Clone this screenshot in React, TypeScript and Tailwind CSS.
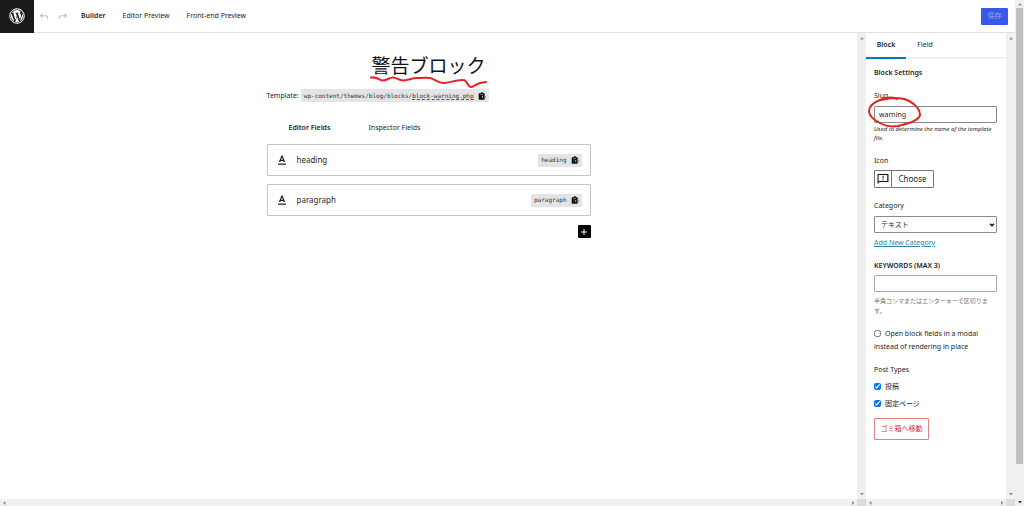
import { useState } from "react";
import type { ReactNode } from "react";

const FIELDS = ["heading", "paragraph"];

function WordPressLogo() {
    return (
        <svg viewBox="0 0 24 24" className="h-4 w-4" fill="#fff">
            <path d="M12.158 12.786l-2.698 7.84c.806.236 1.657.365 2.54.365 1.047 0 2.051-.18 2.986-.51-.024-.037-.046-.078-.065-.123l-2.763-7.572zM3.009 12c0 3.56 2.07 6.634 5.068 8.092L3.788 8.341A8.952 8.952 0 003.009 12zm15.06-.454c0-1.112-.399-1.881-.741-2.48-.456-.741-.883-1.368-.883-2.109 0-.826.627-1.596 1.51-1.596.04 0 .078.005.116.007A8.963 8.963 0 0012 3.009a8.984 8.984 0 00-7.512 4.052c.211.007.41.011.579.011.94 0 2.396-.114 2.396-.114.484-.028.541.684.057.741 0 0-.487.057-1.029.085l3.274 9.739 1.968-5.901-1.401-3.838c-.484-.028-.943-.085-.943-.085-.485-.029-.428-.769.057-.741 0 0 1.484.114 2.368.114.94 0 2.397-.114 2.397-.114.485-.028.542.684.057.741 0 0-.488.057-1.029.085l3.249 9.665.897-2.996c.456-1.168.684-2.137.684-2.907zm1.82-3.86c.039.286.06.593.06.924 0 .912-.171 1.938-.684 3.22l-2.746 7.94A8.989 8.989 0 0020.991 12a8.93 8.93 0 00-1.102-4.314zM12 1.2A10.8 10.8 0 1022.8 12 10.812 10.812 0 0012 1.2zm0 21.105A10.305 10.305 0 1122.305 12 10.317 10.317 0 0112 22.305z" />
            <circle cx="12" cy="12" r="11" fill="none" stroke="#fff" strokeWidth="1.200" />
        </svg>
    );
}

function UndoIcon({ flip = false }: { flip?: boolean }) {
    return (
        <svg
            viewBox="0 0 24 24"
            className={flip ? "h-3 w-3 -scale-x-100" : "h-3 w-3"}
            fill="#a8a8a8"
        >
            <path d="M18.3 11.7c-.6-.6-1.4-.9-2.3-.9H6.7l2.9-3.3-1.1-1-4.5 5L8.5 16l1-1-2.7-2.7H16c.5 0 .9.2 1.3.5 1 1 1 3.4 1 4.5v.3h1.5v-.2c0-1.5 0-4.3-1.5-5.7z" />
        </svg>
    );
}

function CopyIcon() {
    return (
        <svg viewBox="0 0 24 24" className="h-2 w-2">
            <path d="M8 4a4 3 0 0 1 8 0h2a2 2 0 0 1 2 2v15a2 2 0 0 1-2 2H4a2 2 0 0 1-2-2V6a2 2 0 0 1 2-2z" fill="#111" />
            <path d="M7 6.500h8v2H7zM11 14.500l4.500-4V13H24v3.500h-8.500v2.500z" fill="#e4e4e4" />
            <path d="M13 14.800l5-4v2.500h5v3h-5v2.500z" fill="#111" />
        </svg>
    );
}

function TextIcon() {
    return (
        <svg viewBox="0 0 24 24" className="h-3 w-3" fill="#222">
            <path d="M4 19v2.500h16V19zM9.500 13.800h5l.9 2.200h2.800L13.200 3h-2.400L5.800 16h2.800zM12 6.500l1.800 5.200h-3.600z" />
        </svg>
    );
}

function NoticeIcon() {
    return (
        <svg viewBox="0 0 24 24" className="h-3 w-3" fill="#111">
            <path d="M22 2H2a1 1 0 0 0-1 1v19l4-4h17a1 1 0 0 0 1-1V3a1 1 0 0 0-1-1zm-1.500 13.800H4.500l-1.300 1.300V4.200h17.300zM11 5.500h2v5.500h-2zm0 7h2v2h-2z" />
        </svg>
    );
}

/* Small triangle used at both ends of the scrollbars */
function Arrow({ d, color = "#909090" }: { d: string; color?: string }) {
    return (
        <svg viewBox="0 0 8 8" className="h-2 w-2" fill={color}>
            <path d={d} />
        </svg>
    );
}

const UP = "M2 5.500h4L4 3z";
const DOWN = "M2 3h4L4 5.500z";
const LEFT = "M5.500 2v4L3 4z";
const RIGHT = "M3 2v4l2.500-2z";

function ScrollPane({ children, className }: { children: ReactNode; className: string }) {
    return (
        <div className={`grid grid-cols-[minmax(0,1fr)_9px] grid-rows-[minmax(0,1fr)_7px] ${className}`}>
            <div className="overflow-hidden">{children}</div>
            <div className="flex flex-col items-center justify-between bg-[#f0f0f0] py-px">
                <Arrow d={UP} />
                <Arrow d={DOWN} />
            </div>
            <div className="flex items-center justify-between bg-[#f0f0f0]">
                <Arrow d={LEFT} />
                <Arrow d={RIGHT} />
            </div>
            <div className="bg-[#dcdcdc]" />
        </div>
    );
}

function CopyTag({ children }: { children: ReactNode }) {
    return (
        <button
            type="button"
            className="flex h-[13px] items-center gap-1 rounded-[1px] bg-[#e4e4e4] px-[3px] font-['DejaVu_Sans_Mono',monospace] text-[6px] text-[#333]"
        >
            <span>{children}</span>
            <CopyIcon />
        </button>
    );
}

export default function App() {
    const [slug, setSlug] = useState("warning");
    const [keywords, setKeywords] = useState("");

    return (
        <div className="flex h-screen overflow-hidden bg-white font-['Noto_Sans','Noto_Sans_CJK_JP',sans-serif] text-[7px] leading-3 text-[#1e1e1e]">
            <div className="flex min-w-0 flex-1 flex-col">
                {/* Toolbar */}
                <header className="flex h-[33px] shrink-0 items-center border-b border-[#e2e2e2]">
                    <a href="#dashboard" aria-label="WordPress" className="flex h-[33px] w-[34px] items-center justify-center bg-[#191919]">
                        <WordPressLogo />
                    </a>
                    <div className="flex gap-[7px] pl-1">
                        <button type="button" aria-label="Undo"><UndoIcon /></button>
                        <button type="button" aria-label="Redo"><UndoIcon flip /></button>
                    </div>
                    <nav className="flex gap-[17px] pl-3">
                        <button type="button" className="font-semibold">Builder</button>
                        <button type="button">Editor Preview</button>
                        <button type="button">Front-end Preview</button>
                    </nav>
                    <button type="button" className="mr-[7px] ml-auto h-[17px] w-[27px] rounded-[1px] bg-[#3858e9] text-[#93a5f4]">
                        保存
                    </button>
                </header>

                <div className="flex min-h-0 flex-1">
                    {/* Builder */}
                    <ScrollPane className="min-w-0 flex-1">
                        <main className="mx-auto flex w-[324px] flex-col pt-[18px]">
                            <div className="relative self-center">
                                <h1 className="font-['Noto_Sans_CJK_JP',sans-serif] text-[19px] leading-7 text-[#111]">警告ブロック</h1>
                                <svg
                                    viewBox="0 0 120 14"
                                    className="absolute top-6 -left-[3px] h-[14px] w-[120px]"
                                    fill="none"
                                    stroke="#e8222a"
                                    strokeWidth="2"
                                    strokeLinecap="round"
                                    strokeLinejoin="round"
                                >
                                    <path d="M3 2.500C10 1.500 11 5.500 15 5.500S21 2.500 25 2.500s6 3.500 11 3S44 3 49 3s9-.5 13 0 7 4.500 13 5 12-3.500 20-3c5 0 4 7 8 7 3 0 5-4.500 15-5" />
                                </svg>
                            </div>

                            <div className="mt-[10px] flex items-center gap-0.5">
                                <span>Template:</span>
                                <CopyTag>
                                    wp-content/themes/blog/blocks/
                                    <span className="border-b border-dashed border-[#555]">block-warning.php</span>
                                </CopyTag>
                            </div>

                            <div className="mt-5 flex gap-[38px] pl-[22px]">
                                <button type="button" className="font-semibold">Editor Fields</button>
                                <button type="button">Inspector Fields</button>
                            </div>

                            <div className="mt-[10px] flex flex-col gap-2">
                                {FIELDS.map((field) => (
                                    <div key={field} className="flex h-8 items-center rounded-[1px] border border-[#c4c4c4] pr-2 pl-2">
                                        <TextIcon />
                                        <span className="ml-[9px] flex-1 text-[8px]">{field}</span>
                                        <CopyTag>{field}</CopyTag>
                                    </div>
                                ))}
                            </div>

                            <button type="button" aria-label="Add field" className="mt-[9px] flex h-[13px] w-[13px] items-center justify-center self-end rounded-[1px] bg-black">
                                <svg viewBox="0 0 12 12" className="h-2 w-2" stroke="#fff" strokeWidth="1.500">
                                    <path d="M6 1.500v9M1.500 6h9" />
                                </svg>
                            </button>
                        </main>
                    </ScrollPane>

                    {/* Settings */}
                    <ScrollPane className="w-[149px] shrink-0">
                        <aside>
                            <div className="flex h-[26px] border-b-2 border-[#f0f0f0]">
                                <button type="button" className="-mb-0.5 w-[40px] border-b-2 border-[#007cba] font-semibold">Block</button>
                                <button type="button" className="w-[38px]">Field</button>
                            </div>

                            <form className="flex flex-col pt-2 pr-[9px] pl-2">
                                <h2 className="font-semibold">Block Settings</h2>

                                <label htmlFor="slug" className="mt-[11px]">Slug</label>
                                <div className="relative mt-1">
                                    <input
                                        id="slug"
                                        type="text"
                                        value={slug}
                                        onChange={(e) => setSlug(e.target.value)}
                                        className="block h-[17px] w-full rounded-[1px] border border-[#8a8a8a] px-1"
                                    />
                                    <svg
                                        viewBox="0 0 54 34"
                                        className="pointer-events-none absolute -top-[10px] -left-[6px] h-[34px] w-[54px]"
                                        fill="none"
                                        stroke="#e02424"
                                        strokeWidth="2"
                                        strokeLinecap="round"
                                    >
                                        <path d="M29 3C24 1 16 1 12 4 4 7 1 10 1 15c0 5 4 8 11 12 5 3 12 4 18 3 9-2 21-5 22-11 0-7-8-14-16-16-8-2-16-1-23 1" />
                                    </svg>
                                </div>
                                <p className="mt-0.5 text-[6px] leading-[9px] italic">
                                    Used to determine the name of the template file.
                                </p>

                                <span className="mt-3">Icon</span>
                                <div className="mt-[3px] flex h-[18px] w-[60px] rounded-[1px] border border-[#777]">
                                    <span className="flex w-[17px] items-center justify-center border-r border-[#777]">
                                        <NoticeIcon />
                                    </span>
                                    <button type="button" className="flex-1 text-[8px]">Choose</button>
                                </div>

                                <label htmlFor="category" className="mt-3">Category</label>
                                <div className="relative mt-1">
                                    <select id="category" className="block h-[17px] w-full appearance-none rounded-[1px] border border-[#8a8a8a] bg-white px-1.5">
                                        <option>テキスト</option>
                                    </select>
                                    <svg viewBox="0 0 6 6" className="pointer-events-none absolute top-1.5 right-0.5 h-1.5 w-1.5" fill="none" stroke="#111" strokeWidth="1.500">
                                        <path d="M1 1.800l2 2 2-2" />
                                    </svg>
                                </div>
                                <a href="#new-category" className="mt-1 self-start text-[#2a7fae] underline">Add New Category</a>

                                <label htmlFor="keywords" className="mt-[11px] font-semibold">KEYWORDS (MAX 3)</label>
                                <input
                                    id="keywords"
                                    type="text"
                                    value={keywords}
                                    onChange={(e) => setKeywords(e.target.value)}
                                    className="mt-[3px] h-[17px] rounded-[1px] border border-[#aaa] px-1"
                                />
                                <p className="mt-1 text-[6px] leading-[10px] text-[#757575]">
                                    半角コンマまたはエンターキーで区切ります。
                                </p>

                                <label className="mt-[11px] leading-[13px]">
                                    <input type="checkbox" className="mr-1 mb-0.5 h-[7px] w-[7px] align-middle" />
                                    Open block fields in a modal instead of rendering in place
                                </label>

                                <fieldset className="mt-[11px] flex flex-col gap-1">
                                    <legend className="mb-1">Post Types</legend>
                                    {["投稿", "固定ページ"].map((type) => (
                                        <label key={type} className="flex items-center gap-1 leading-[13px]">
                                            <input type="checkbox" defaultChecked className="h-[7px] w-[7px]" />
                                            {type}
                                        </label>
                                    ))}
                                </fieldset>

                                <button type="button" className="mt-2 h-[22px] w-[55px] self-start rounded-[1px] border border-[#e08080] text-[#cc3340]">
                                    ゴミ箱へ移動
                                </button>
                            </form>
                        </aside>
                    </ScrollPane>
                </div>
            </div>

            {/* Window scrollbar */}
            <div className="flex w-[9px] shrink-0 flex-col items-center bg-[#f0f0f0]">
                <Arrow d={UP} />
                <div className="w-[7px] flex-1 bg-[#c1c1c1]" />
                <div className="flex h-[42px] flex-col justify-end">
                    <Arrow d={DOWN} color="#404040" />
                </div>
            </div>
        </div>
    );
}
